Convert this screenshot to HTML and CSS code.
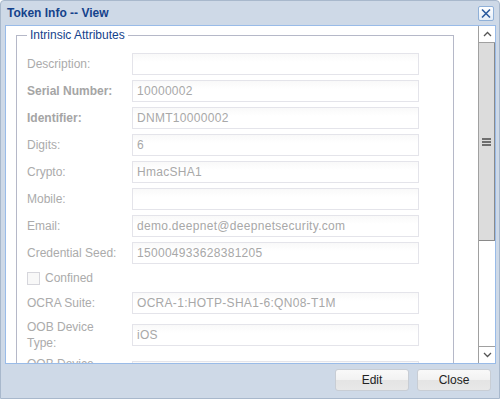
FILE: index.html
```html
<!DOCTYPE html>
<html>
<head>
<meta charset="utf-8">
<link rel="stylesheet" href="styles.css">
</head>
<body>
<div class="window">
  <div class="titlebar">
    <span class="title">Token Info -- View</span>
    <span class="close-btn">
      <svg width="12" height="11" viewBox="0 0 12 11"><path d="M2 1.5 L10 9.5 M10 1.5 L2 9.5" stroke="#2a5a9e" stroke-width="1.6" fill="none"/></svg>
    </span>
  </div>
  <div class="body">
    <div class="scroll-area">
      <fieldset class="fieldset">
        <legend class="legend">Intrinsic Attributes</legend>
        <div class="row"><label class="lbl">Description:</label><div class="field"></div></div>
        <div class="row"><label class="lbl bold">Serial Number:</label><div class="field">10000002</div></div>
        <div class="row"><label class="lbl bold">Identifier:</label><div class="field">DNMT10000002</div></div>
        <div class="row"><label class="lbl">Digits:</label><div class="field">6</div></div>
        <div class="row"><label class="lbl">Crypto:</label><div class="field">HmacSHA1</div></div>
        <div class="row"><label class="lbl">Mobile:</label><div class="field"></div></div>
        <div class="row"><label class="lbl">Email:</label><div class="field">demo.deepnet@deepnetsecurity.com</div></div>
        <div class="row"><label class="lbl">Credential Seed:</label><div class="field">150004933628381205</div></div>
        <div class="check-row"><span class="checkbox"></span><span class="check-label">Confined</span></div>
        <div class="row"><label class="lbl">OCRA Suite:</label><div class="field">OCRA-1:HOTP-SHA1-6:QN08-T1M</div></div>
        <div class="row"><label class="lbl two">OOB Device<br>Type:</label><div class="field">iOS</div></div>
        <div class="row"><label class="lbl two">OOB Device<br>Token:</label><div class="field"></div></div>
      </fieldset>
    </div>
    <div class="scrollbar">
      <div class="sb-btn sb-up">
        <svg width="9" height="6" viewBox="0 0 9 6"><path d="M1 5 L4.5 1.5 L8 5" stroke="#555" stroke-width="1.3" fill="none"/></svg>
      </div>
      <div class="sb-thumb">
        <svg width="9" height="8" viewBox="0 0 9 8"><rect x="0" y="0" width="9" height="2" fill="#6f6f6f"/><rect x="0" y="3" width="9" height="2" fill="#6f6f6f"/><rect x="0" y="6" width="9" height="2" fill="#6f6f6f"/></svg>
      </div>
      <div class="sb-track"></div>
      <div class="sb-btn sb-down">
        <svg width="9" height="6" viewBox="0 0 9 6"><path d="M1 1 L4.5 4.5 L8 1" stroke="#555" stroke-width="1.3" fill="none"/></svg>
      </div>
    </div>
  </div>
  <div class="footer">
    <button class="btn">Edit</button>
    <button class="btn">Close</button>
  </div>
</div>
</body>
</html>
```
FILE: styles.css
```css
* { box-sizing: border-box; }
html, body { margin: 0; padding: 0; }
body {
  width: 500px;
  height: 399px;
  overflow: hidden;
  font-family: "Liberation Sans", Arial, sans-serif;
  font-size: 12px;
  background: #fff;
}
.window {
  width: 500px;
  height: 399px;
  background: #ced9e7;
  border: 1px solid #a8b8cc;
  border-radius: 4px 4px 0 0;
  display: flex;
  flex-direction: column;
  padding: 0 3px 0 4px;
}
.titlebar {
  height: 24px;
  display: flex;
  align-items: center;
  justify-content: space-between;
  padding: 0 2px 0 2px;
}
.title {
  color: #15428b;
  font-weight: bold;
  font-size: 12px;
}
.close-btn {
  width: 16px;
  height: 15px;
  border: 1px solid #8fb0d8;
  border-radius: 2px;
  background: linear-gradient(#ffffff, #e4edf8);
  display: flex;
  align-items: center;
  justify-content: center;
}
.body {
  height: 339px;
  border: 1px solid #99bbe8;
  background: #fff;
  display: flex;
}
.scroll-area {
  flex: 1;
  overflow: hidden;
  padding: 2px 24px 0 10px;
}
.fieldset {
  margin: 0;
  border: 1px solid #b5b8c8;
  padding: 11px 10px 10px 10px;
  min-width: 0;
}
.legend {
  color: #15428b;
  padding: 0 3px;
  margin-left: 0;
  font-size: 12px;
  line-height: 14px;
}
.row {
  display: flex;
  align-items: center;
  margin-bottom: 5px;
}
.lbl {
  width: 105px;
  flex: none;
  color: #ababab;
  line-height: 22px;
}
.lbl.bold { font-weight: bold; color: #a5a5a5; }
.lbl.two { line-height: 16px; }
.field {
  width: 287px;
  height: 22px;
  border: 1px solid #e4e4ea;
  background: linear-gradient(#f9f9f9, #ffffff 40%);
  color: #a8a8a8;
  padding: 0 4px;
  line-height: 20px;
  letter-spacing: 0.3px;
  white-space: nowrap;
  overflow: hidden;
}
.check-row {
  display: flex;
  align-items: center;
  height: 18px;
  margin-bottom: 5px;
}
.checkbox {
  width: 13px;
  height: 13px;
  border: 1px solid #d6d6dc;
  background: #f8f8f8;
  margin-right: 5px;
}
.check-label { color: #ababab; }
.scrollbar {
  width: 17px;
  flex: none;
  display: flex;
  flex-direction: column;
  background: #fff;
  border-left: 1px solid #a0a0a0;
}
.sb-btn {
  height: 17px;
  display: flex;
  align-items: center;
  justify-content: center;
  background: #fff;
}
.sb-up { border-bottom: 1px solid #a0a0a0; }
.sb-down { border-top: 1px solid #a0a0a0; }
.sb-thumb {
  height: 198px;
  background: #dcdcdc;
  border-right: 1px solid #8a8a8a;
  border-bottom: 1px solid #8a8a8a;
  display: flex;
  align-items: center;
  justify-content: center;
}
.sb-track { flex: 1; }
.footer {
  flex: 1;
  display: flex;
  justify-content: flex-end;
  align-items: center;
  gap: 8px;
  padding: 0 5px 2px 0;
}
.btn {
  width: 74px;
  height: 22px;
  border: 1px solid #c8cdd4;
  border-radius: 3px;
  background: linear-gradient(#f9f9f9 0%, #f2f2f2 50%, #e4e4e4 51%, #e8e8e8 100%);
  font-family: "Liberation Sans", Arial, sans-serif;
  font-size: 12px;
  color: #222;
  padding: 0;
}
```
